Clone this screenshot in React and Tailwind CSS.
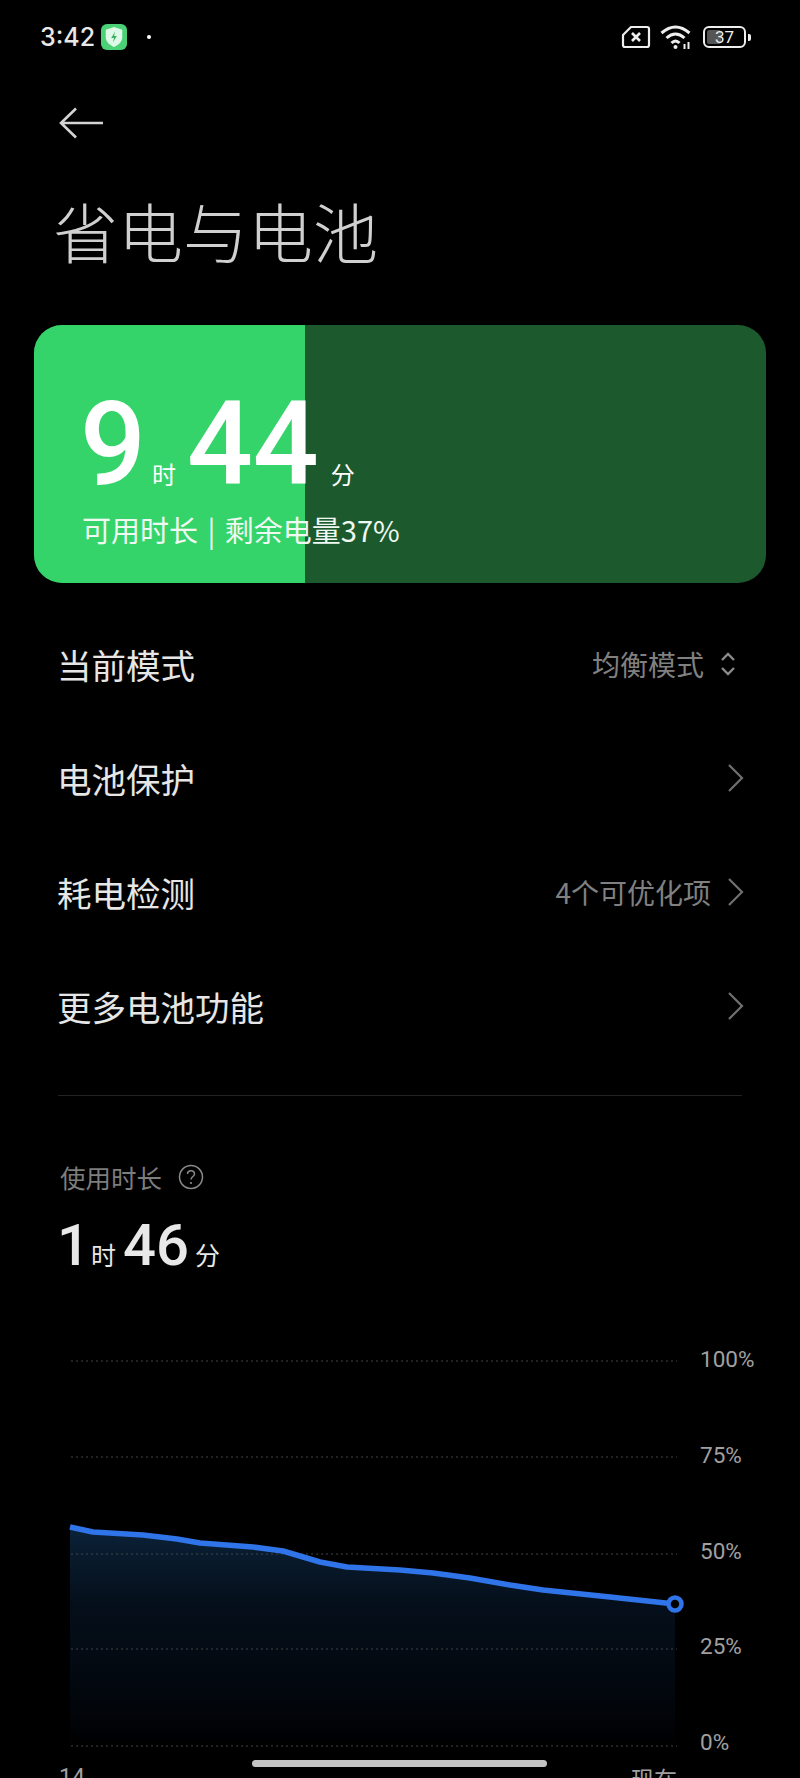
const cjk = { fontFamily: '"Noto Sans CJK SC", "Noto Sans", sans-serif' };
const num = { fontFamily: 'Roboto, "Noto Sans CJK SC", sans-serif' };
const inter = { fontFamily: 'Inter, "Noto Sans CJK SC", sans-serif' };

function Chevron() {
  return (
    <svg width="18" height="30" viewBox="0 0 18 30" fill="none" stroke="#6f6f6f" strokeWidth="2.2">
      <path d="M2 2 L15 15 L2 28" />
    </svg>
  );
}

function Row({ label, right, icon }) {
  return (
    <div className="flex h-[114px] items-center justify-between pl-[57px] pr-[55px]">
      <span className="text-[34.5px] leading-[40px] text-[#e6e6e6]">{label}</span>
      <span className="flex items-center">
        {right && <span className="text-[28px] leading-[36px] text-[#808080]">{right}</span>}
        {icon}
      </span>
    </div>
  );
}

const pts = [[70,1525],[93,1530],[143,1533],[177,1537],[200,1541],[253,1545],[283,1549],[320,1560],[347,1565],[400,1568],[433,1571],[470,1576],[510,1583],[543,1588],[610,1595],[675,1602]];
const Y0 = 1340;
const line = pts.map(([x, y], i) => `${i ? 'L' : 'M'}${x} ${y - Y0}`).join(' ');
const area = `${line} L675 404 L70 404 Z`;

export default function App() {
  return (
    <div className="relative h-[1778px] w-[800px] overflow-hidden bg-black text-white" style={cjk}>
      {/* status bar */}
      <div className="flex h-[74px] items-center justify-between pl-[40px] pr-[49px]">
        <div className="flex items-center">
          <span className="text-[25px] font-medium leading-[28px] text-[#e8e8e8]" style={inter}>3:42</span>
          <span className="ml-[6px] flex h-[26px] w-[26px] items-center justify-center rounded-[6px] bg-[#4bd276]">
            <svg width="20" height="22" viewBox="0 0 18 20">
              <path d="M9 1 L16.500 3.500 V10 C16.500 14.500 13 17.500 9 19 C5 17.500 1.500 14.500 1.500 10 V3.500 Z" fill="#dff8e7" />
              <path d="M10 5 L6.500 11 H9 L8 15 L11.500 9 H9 Z" fill="#35b35f" />
            </svg>
          </span>
          <span className="ml-[20px] h-[4px] w-[4px] rounded-full bg-white" />
        </div>
        <div className="flex items-center">
          <svg width="30" height="24" viewBox="0 0 30 24" fill="none" stroke="#eee" strokeWidth="2.200">
            <path d="M10 2 H26 Q28 2 28 4 V20 Q28 22 26 22 H4 Q2 22 2 20 V10 Z" strokeLinejoin="round" />
            <path d="M11 8 L19 16 M19 8 L11 16" strokeWidth="2.600" />
          </svg>
          <svg className="ml-[8px]" width="35" height="26" viewBox="0 0 34 26" fill="none" stroke="#eee" strokeWidth="3">
            <path d="M2 9 Q16 -3 30 9" />
            <path d="M7 14 Q16 6 25 14" />
            <path d="M12 19 Q16 15 20 19" />
            <circle cx="16" cy="23" r="2" fill="#eee" stroke="none" />
            <path d="M25 20 V25 M29 18 V25" strokeWidth="2" />
          </svg>
          <div className="relative ml-[9px] flex h-[22px] w-[43px] items-center justify-center overflow-hidden rounded-[6px] border-2 border-[#eee] text-[17px] leading-[18px] text-[#eee]" style={num}>
            <span className="absolute inset-y-[2px] left-[2px] w-[14px] rounded-[2px] bg-[#555]" />
            <span className="relative">37</span>
          </div>
          <span className="ml-[2px] h-[7px] w-[3px] rounded-r-[2px] bg-[#eee]" />
        </div>
      </div>

      {/* back */}
      <div className="pl-[59px] pt-[33px]">
        <svg className="block" width="46" height="32" viewBox="0 0 46 32" fill="none" stroke="#d4d4d4" strokeWidth="2.600">
          <path d="M44 16 H2 M17 1.500 L2 16 L17 30.500" />
        </svg>
      </div>

      {/* title */}
      <h1 className="pl-[53px] pt-[53px] text-[65px] font-light leading-[76px] text-[#d0d0d0]">省电与电池</h1>

      {/* card */}
      <div className="relative mx-[34px] mt-[57px] h-[258px] overflow-hidden rounded-[28px] bg-[#1c5a2e]">
        <div className="absolute inset-y-0 left-0 w-[271px] bg-[#35d46a]" />
        <div className="relative pl-[46px] pt-[61px]">
          <div className="flex items-baseline leading-none">
            <span className="text-[116px] font-medium leading-[116px]" style={num}>9</span>
            <span className="ml-[6px] text-[24px] leading-[24px]">时</span>
            <span className="ml-[11px] text-[116px] font-medium leading-[116px]" style={num}>44</span>
            <span className="ml-[12px] text-[24px] leading-[24px]">分</span>
          </div>
          <div className="ml-[2px] mt-[9px] text-[29px] leading-[36px] text-[#f0f8f2] [word-spacing:3px]">可用时长 | 剩余电量37%</div>
        </div>
      </div>

      {/* rows */}
      <div className="mt-[24px]">
        <Row label="当前模式" right="均衡模式" icon={
          <svg className="ml-[15px] mr-[8px]" width="18" height="26" viewBox="0 0 18 26" fill="none" stroke="#8a8a8a" strokeWidth="2.400">
            <path d="M3 9 L9 3 L15 9 M3 17 L9 23 L15 17" />
          </svg>
        } />
        <Row label="电池保护" icon={<Chevron />} />
        <Row label="耗电检测" right="4个可优化项" icon={<span className="ml-[16px]"><Chevron /></span>} />
        <Row label="更多电池功能" icon={<Chevron />} />
      </div>

      <div className="mx-[58px] mt-[32px] h-px bg-[#232323]" />

      {/* usage */}
      <div className="pl-[60px] pt-[63px]">
        <div className="flex items-center">
          <span className="text-[25.500px] leading-[36px] text-[#7d7d7d]">使用时长</span>
          <svg className="ml-[16px]" width="26" height="26" viewBox="0 0 26 26" fill="none" stroke="#8a8a8a" strokeWidth="1.500">
            <circle cx="13" cy="13" r="11.500" />
            <path d="M9.500 10 C9.500 5.500 16.500 5.500 16.500 10 C16.500 12.500 13 12.500 13 15.500" />
            <circle cx="13" cy="19" r="1.100" fill="#8a8a8a" stroke="none" />
          </svg>
        </div>
        <div className="mt-[16px] flex items-baseline text-[#e8e8e8]">
          <span className="ml-[-3px] text-[58px] font-medium leading-[68px]" style={num}>1</span>
          <span className="ml-[1px] text-[25px]">时</span>
          <span className="ml-[7px] text-[58px] font-medium leading-[68px]" style={num}>46</span>
          <span className="ml-[6px] text-[25px]">分</span>
        </div>
      </div>

      {/* chart */}
      <div className="mt-[63px] flex">
        <svg className="block shrink-0" width="690" height="420" viewBox="0 0 690 420" fill="none">
          <defs>
            <linearGradient id="fill" x1="0" y1="0" x2="0" y2="1">
              <stop offset="0" stopColor="#0b2238" />
              <stop offset="0.35" stopColor="#050f1b" />
              <stop offset="0.8" stopColor="#02060c" />
              <stop offset="1" stopColor="#000" />
            </linearGradient>
          </defs>
          <path d={area} fill="url(#fill)" />
          {[19, 115, 212, 307, 404].map((y) => (
            <line key={y} x1="71" x2="677" y1={y} y2={y} stroke="#444" strokeWidth="1" strokeDasharray="2 3" />
          ))}
          <path d={line} stroke="#2f74e8" strokeWidth="5.500" strokeLinejoin="round" />
          <circle cx="675" cy="262" r="6.500" fill="#000" stroke="#2f74e8" strokeWidth="4.500" />
        </svg>
        <div className="ml-[10px] mt-[1px] flex h-[415px] flex-col justify-between text-[22.500px] leading-[32px] text-[#a0a0a0]" style={num}>
          <span>100%</span>
          <span>75%</span>
          <span>50%</span>
          <span>25%</span>
          <span>0%</span>
        </div>
      </div>

      <div className="absolute bottom-[-16px] left-0 flex w-full justify-between pl-[59px] pr-[123px] text-[23px] leading-[32px] text-[#a0a0a0]">
        <span style={num}>14</span>
        <span>现在</span>
      </div>

      {/* home indicator */}
      <div className="absolute bottom-[11px] left-[252px] h-[7px] w-[295px] rounded-full bg-[#c4c4c4]" />
    </div>
  );
}
